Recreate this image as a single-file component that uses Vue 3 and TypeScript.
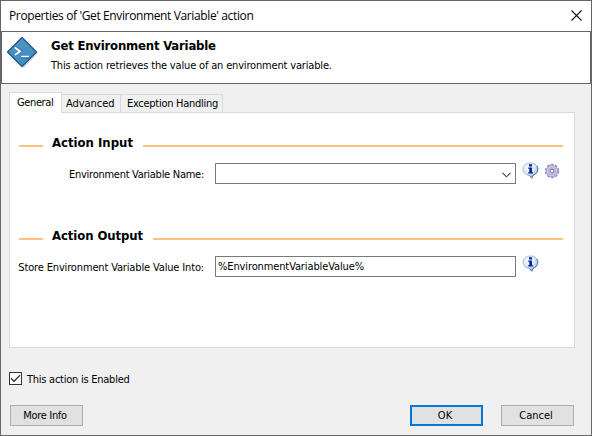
<script setup lang="ts">
import { ref } from 'vue'

const tabs = [
  { label: 'General', key: 'general' },
  { label: 'Advanced', key: 'advanced' },
  { label: 'Exception Handling', key: 'exception' },
]
const active = ref('general')
const output = ref('%EnvironmentVariableValue%')
const enabled = ref(true)
</script>

<template>
  <div class="dialog">
    <div class="titlebar">
      <span class="title">Properties of 'Get Environment Variable' action</span>
      <svg class="close" width="11" height="11" viewBox="0 0 11 11"><path d="M.5 .5 10.5 10.5M10.5 .5 .5 10.5" stroke="#111" stroke-width="1.1" /></svg>
    </div>
    <header class="header">
      <svg class="logo" width="34" height="34" viewBox="0 0 34 34">
        <defs>
          <linearGradient id="diamond" x1="0" y1="0" x2="0" y2="1">
            <stop offset="0" stop-color="#5795c3" /><stop offset=".5" stop-color="#4590c3" /><stop offset="1" stop-color="#438fc3" />
          </linearGradient>
        </defs>
        <path d="M17 3 32 17 18 32 4 19Z" fill="#777" opacity=".3" />
        <path d="M16 1.5 30.5 16 16 30.5 1.500 16Z" fill="url(#diamond)" stroke="#1d568c" stroke-width="1.3" stroke-linejoin="round" />
        <path d="M9 11.500 14.500 15 9.500 19M15 21.500H23" fill="none" stroke="#1f5c99" stroke-width="3.200" opacity=".55" />
        <path d="M8.800 11.500 14 15.200 9 19" fill="none" stroke="#fff" stroke-width="2" />
        <path d="M15 20.500H23" stroke="#fff" stroke-width="1.400" />
      </svg>
      <div class="heading">
        <h1>Get Environment Variable</h1>
        <p>This action retrieves the value of an environment variable.</p>
      </div>
    </header>
    <nav class="tabs">
      <div v-for="t in tabs" :key="t.key" class="tab" :class="[t.key, { active: active === t.key }]" @click="active = t.key">
        <span>{{ t.label }}</span>
      </div>
    </nav>
    <main class="panel">
      <section>
        <h2 class="rule"><span class="in">Action Input</span></h2>
        <div class="row">
          <label class="l1"><span>Environment Variable Name:</span></label>
          <div class="field">
            <svg class="chevron" width="9" height="6" viewBox="0 0 9 6"><path d="M.5 .8 4.500 4.800 8.500 .8" fill="none" stroke="#444" stroke-width="1.100" /></svg>
          </div>
          <svg class="info" width="18" height="18" viewBox="0 0 18 18"><use href="#info-shape" /></svg>
          <svg class="gear" width="16" height="16" viewBox="0 0 16 16">
            <circle cx="8" cy="8" r="6.200" fill="none" stroke="#9490c0" stroke-width="2" stroke-dasharray="2.700 1.196" />
            <circle cx="8" cy="8" r="5.700" fill="#c6c5e3" stroke="#a5a2cf" stroke-width=".9" />
            <circle cx="8" cy="8" r="3.700" fill="none" stroke="#b0aed6" stroke-width=".8" />
            <circle cx="8" cy="8" r="1.900" fill="#f4f4fb" stroke="#8480b2" stroke-width="1.100" />
          </svg>
        </div>
      </section>
      <section class="second">
        <h2 class="rule"><span class="out">Action Output</span></h2>
        <div class="row">
          <label class="l2"><span>Store Environment Variable Value Into:</span></label>
          <div class="field"><span class="value">{{ output }}</span></div>
          <svg class="info" width="18" height="18" viewBox="0 0 18 18">
            <defs>
              <radialGradient id="bubble" cx=".4" cy=".3" r=".7">
                <stop offset="0" stop-color="#fff" /><stop offset=".5" stop-color="#deebfb" /><stop offset="1" stop-color="#94b9e4" />
              </radialGradient>
              <g id="info-shape">
                <path d="M8.500 1C13 1 16 3.500 16 7.300 16 10.500 13.800 12.600 11 13.200L9.800 16.200 7.300 13.400C3.600 13 1 10.700 1 7.300 1 3.500 4 1 8.500 1Z" fill="url(#bubble)" stroke="#a3b8d8" stroke-width=".9" />
                <path d="M14.800 4C17 8 15 12 11 13.200L9.800 16.200 7.500 13.500" fill="none" stroke="#3e6799" stroke-width=".8" />
                <path d="M7 2.300H10V4.400H7ZM6.200 5.500H10V10.300H11V11.500H6.200V10.300H7.300V6.700H6.200Z" fill="#06258f" />
              </g>
            </defs>
            <use href="#info-shape" />
          </svg>
        </div>
      </section>
    </main>
    <div class="enabled" @click="enabled = !enabled">
      <span class="box"><svg v-if="enabled" width="11" height="11" viewBox="0 0 11 11"><path d="M1 5.300 4 8.300 10 2.200" fill="none" stroke="#333" stroke-width="1.300" /></svg></span>
      <span class="etext">This action is Enabled</span>
    </div>
    <footer class="footer">
      <button class="more"><span>More Info</span></button>
      <button class="ok"><span>OK</span></button>
      <button class="cancel"><span>Cancel</span></button>
    </footer>
  </div>
</template>

<style>
body { margin: 0; }
</style>

<style scoped>
* { box-sizing: border-box; }
.dialog { width: 592px; height: 436px; border: 1px solid #666; background: #f0f0f0; color: #000; font: 11px/14px "DejaVu Sans Condensed", "DejaVu Sans", sans-serif; font-stretch: condensed; white-space: nowrap; overflow: hidden; }
.titlebar { height: 30px; background: #fff; display: flex; align-items: center; justify-content: space-between; padding: 0 9px 0 8px; font: 12px/16px "Open Sans", sans-serif; }
.title { letter-spacing: -.37px; }
.close { display: block; margin-top: -2px; }
.header { height: 53px; border: 1px solid #666; background: #fff; display: flex; }
.logo { display: block; margin: 4px 0 0 4px; flex: none; }
.heading { padding: 6px 0 0 11px; }
h1, h2 { font-size: 13px; line-height: 16px; font-weight: bold; margin: 0; }
h1 { letter-spacing: -.2px; }
p { margin: 5px 0 0; line-height: 14px; letter-spacing: -.17px; }
.tabs { display: flex; align-items: flex-end; height: 28px; padding-left: 8px; }
.tab { height: 18px; border: 1px solid #d9d9d9; border-left: 0; border-bottom: 0; padding: 2px 0 0 6px; }
.tab.active { height: 21px; margin-bottom: -1px; border-left: 1px solid #d9d9d9; background: #fff; padding: 3px 0 0 7px; position: relative; }
.general { width: 53px; letter-spacing: -.38px; }
.advanced { width: 59px; padding-left: 4px; letter-spacing: -.05px; }
.exception { width: 102px; letter-spacing: -.28px; }
.panel { width: 566px; height: 236px; margin-left: 8px; border: 1px solid #d9d9d9; background: #fff; padding: 21px 11px 0 9px; }
.rule { display: flex; align-items: center; height: 17px; gap: 9px; }
.rule::before, .rule::after { content: ""; height: 2px; background: #ffc080; margin-top: 7px; }
.rule::before { width: 24px; }
.rule::after { flex: 1; }
.in { width: 82px; }
.out { width: 92px; letter-spacing: -.08px; }
.row { display: flex; align-items: flex-start; margin-top: 12px; height: 21px; }
label { width: 196px; flex: none; display: flex; justify-content: flex-end; padding: 5px 11px 0 0; }
.l1 { letter-spacing: -.27px; }
.l2 { letter-spacing: -.15px; }
.field { width: 301px; flex: none; height: 21px; border: 1px solid #7a7a7a; padding: 3px 2px; position: relative; }
.value { letter-spacing: -.12px; }
.chevron { position: absolute; right: 4px; top: 8px; }
.info { flex: none; margin-left: 6px; margin-top: -1px; }
.gear { flex: none; margin-left: 4px; }
.second { margin-top: 43px; }
.enabled { display: flex; align-items: center; margin: 24px 0 0 8px; height: 13px; gap: 5px; }
.etext { letter-spacing: -.25px; padding-top: 2px; }
.box { width: 13px; height: 13px; border: 1px solid #333; background: #fff; display: block; }
.box svg { display: block; }
.footer { display: flex; margin: 20px 0 0 9px; }
button { width: 73px; height: 21px; border: 1px solid #adadad; background: #e1e1e1; font: inherit; color: #000; padding: 0 3px 0 0; }
.more { letter-spacing: -.32px; }
.ok { border: 2px solid #0078d7; margin-left: 327px; }
.cancel { margin-left: 18px; }
</style>
